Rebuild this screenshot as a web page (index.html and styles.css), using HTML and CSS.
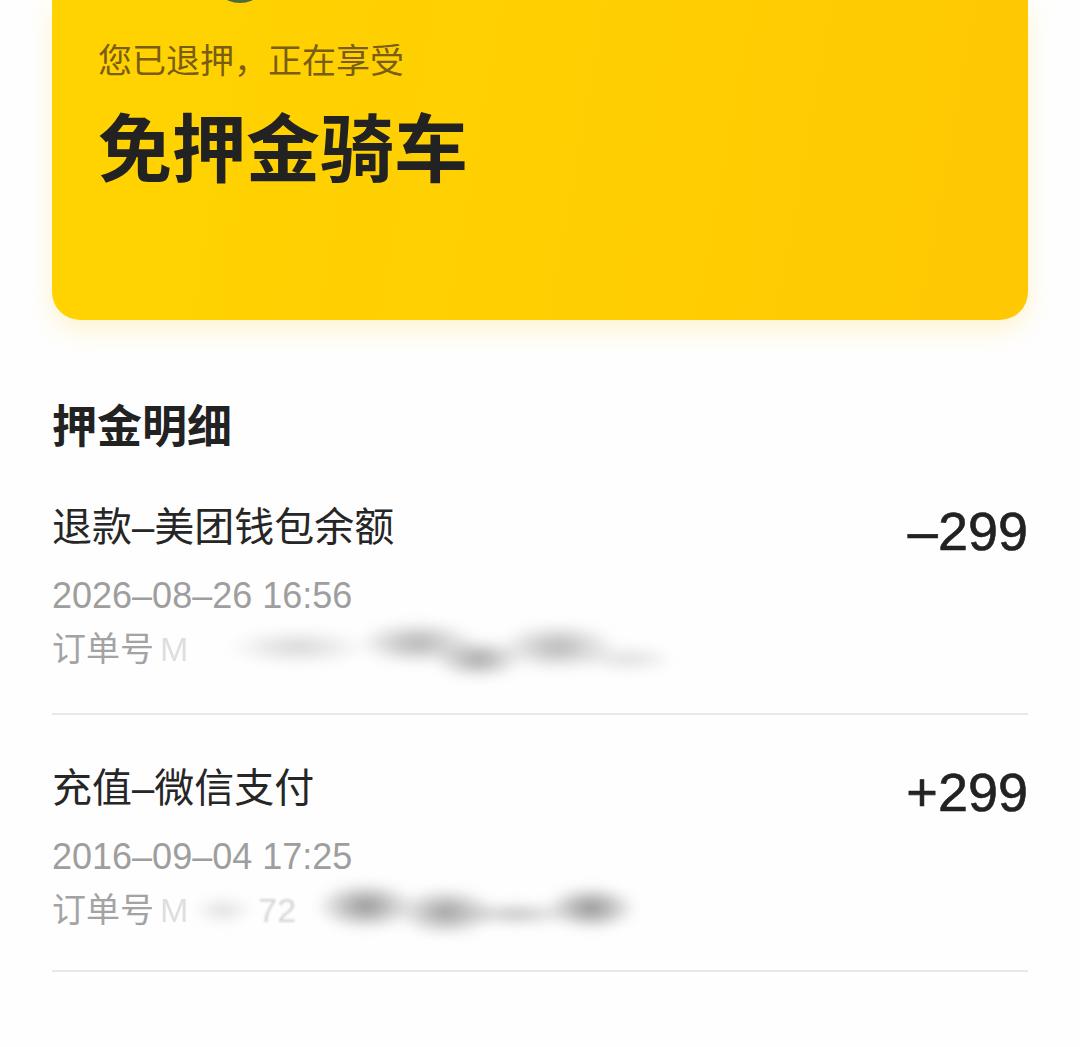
FILE: index.html
```html
<!DOCTYPE html>
<html lang="zh-CN">
<head>
  <meta charset="UTF-8">
  <meta name="viewport" content="width=device-width, initial-scale=1.0">
  <title>押金明细</title>
  <link rel="stylesheet" href="styles.css">
</head>
<body>

<!-- 顶部状态卡片 -->
<div class="karta">
  <div class="ikona"></div>
  <p class="podpowiedz">您已退押，正在享受</p>
  <h1 class="tytul">免押金骑车</h1>
</div>

<!-- 押金明细 -->
<div class="sekcja">
  <h2 class="naglowek">押金明细</h2>

  <div class="wiersz">
    <div class="opis">
      <div class="nazwa">退款–美团钱包余额</div>
      <div class="data">2026–08–26 16:56</div>
      <div class="zamowienie">订单号 <span class="ukryte">M</span><span class="plama plama-1"></span></div>
    </div>
    <div class="kwota">–299</div>
  </div>

  <div class="wiersz">
    <div class="opis">
      <div class="nazwa">充值–微信支付</div>
      <div class="data">2016–09–04 17:25</div>
      <div class="zamowienie">订单号<span class="ukryte">M</span><span class="plama plama-krotka"></span><span class="polukryte">72</span><span class="plama plama-2"></span></div>
    </div>
    <div class="kwota">+299</div>
  </div>
</div>

</body>
</html>
```

FILE: styles.css
```css
* {
  margin: 0;
  padding: 0;
  box-sizing: border-box;
}
body {
  background: #fefefe;
  font-family: "Liberation Sans", "Noto Sans CJK SC", sans-serif;
  color: #222;
  padding: 0 52px;
  overflow: hidden;
}
.karta {
  height: 320px;
  padding-left: 46px;
  border-radius: 0 0 28px 28px;
  background: linear-gradient(100deg, #ffd300 0%, #ffcf02 50%, #fec802 100%);
  box-shadow: 0 10px 26px rgba(255, 205, 40, 0.22);
  overflow: hidden;
}
.ikona {
  width: 60px;
  height: 60px;
  margin: -57px 0 0 112px;
  border-radius: 50%;
  background: #4c6b3a;
}
.podpowiedz {
  margin-top: 36px;
  font-size: 34px;
  line-height: 44px;
  color: #7a5d14;
}
.tytul {
  margin-top: 23px;
  font-size: 74px;
  line-height: 89px;
  font-weight: 700;
  color: #222;
}
.sekcja {
  padding-top: 81px;
}
.naglowek {
  font-size: 45px;
  line-height: 54px;
  font-weight: 700;
  color: #222;
}
.wiersz {
  display: flex;
  justify-content: space-between;
  padding: 48px 0 42px;
  border-bottom: 2px solid #e8e8e8;
}
.wiersz + .wiersz {
  padding: 49px 0 38px;
}
.nazwa {
  font-size: 40px;
  line-height: 48px;
  color: #262626;
}
.data {
  margin-top: 21px;
  font-size: 36px;
  line-height: 47px;
  color: #9e9e9e;
}
.zamowienie {
  margin-top: 8px;
  font-size: 34px;
  line-height: 44px;
  color: #a3a3a3;
  display: flex;
  align-items: center;
}
.ukryte {
  opacity: 0.35;
  margin-left: 6px;
}
.polukryte {
  opacity: 0.45;
  filter: blur(1px);
}
/* rozmyte fragmenty numeru zamowienia */
.plama {
  display: inline-block;
  height: 64px;
  margin: -10px 0;
  filter: blur(6px);
}
.plama-krotka {
  width: 70px;
  background: radial-gradient(ellipse 30px 14px at 35px 32px, rgba(200, 200, 200, 0.6), transparent);
}
.plama-1 {
  width: 440px;
  margin-left: 40px;
  background:
    radial-gradient(ellipse 70px 18px at 70px 30px, rgba(175, 175, 175, 0.5), transparent),
    radial-gradient(ellipse 60px 22px at 190px 26px, rgba(150, 150, 150, 0.75), transparent),
    radial-gradient(ellipse 45px 20px at 250px 42px, rgba(140, 140, 140, 0.8), transparent),
    radial-gradient(ellipse 60px 24px at 330px 30px, rgba(150, 150, 150, 0.7), transparent),
    radial-gradient(ellipse 50px 14px at 400px 42px, rgba(190, 190, 190, 0.5), transparent);
}
.plama-2 {
  width: 360px;
  margin-left: 10px;
  background:
    radial-gradient(ellipse 50px 24px at 60px 28px, rgba(125, 125, 125, 0.85), transparent),
    radial-gradient(ellipse 50px 24px at 140px 34px, rgba(130, 130, 130, 0.8), transparent),
    radial-gradient(ellipse 60px 12px at 210px 36px, rgba(150, 150, 150, 0.6), transparent),
    radial-gradient(ellipse 45px 22px at 285px 30px, rgba(120, 120, 120, 0.85), transparent);
}
.kwota {
  margin-top: 4px;
  font-size: 54px;
  line-height: 48px;
  color: #222;
  -webkit-text-stroke: 0.6px #222;
}
```
